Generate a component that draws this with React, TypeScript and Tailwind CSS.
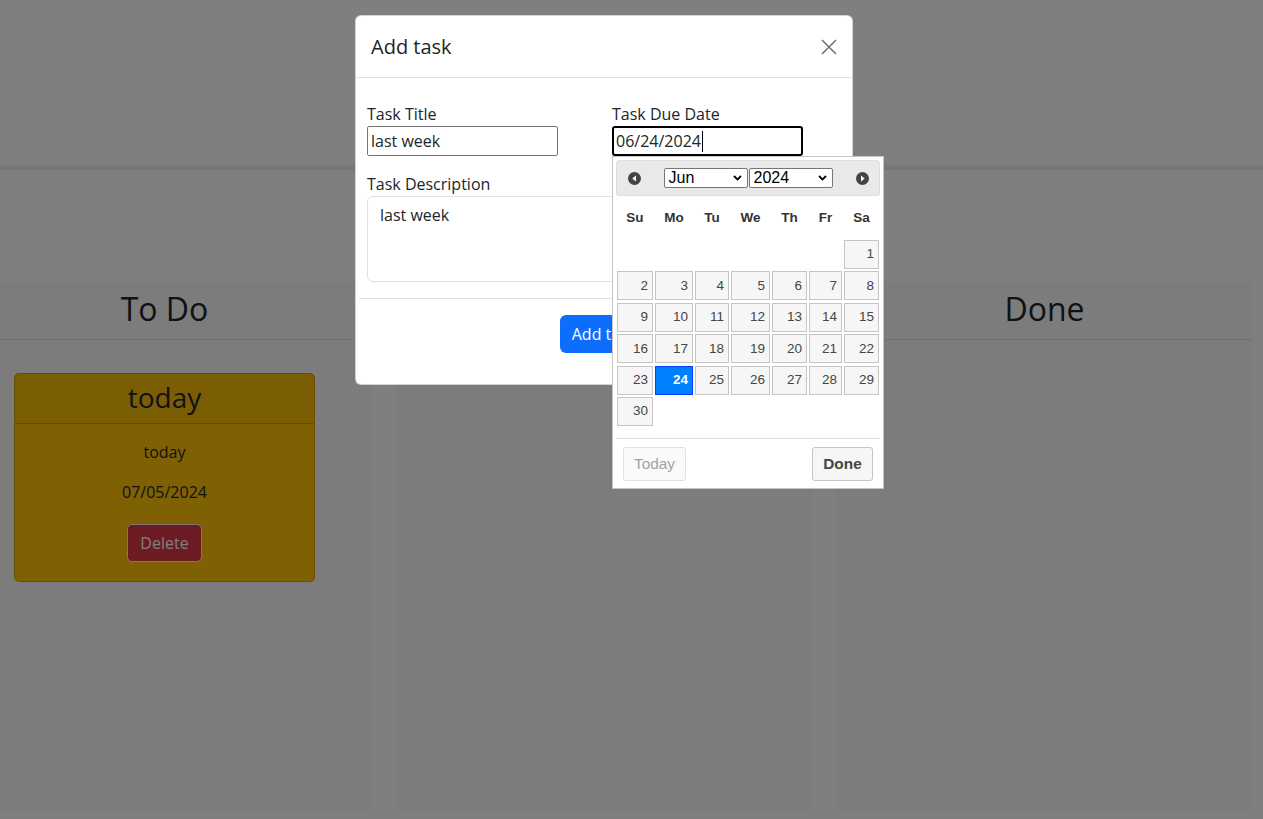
import React from "react";

const heads = ["Su", "Mo", "Tu", "We", "Th", "Fr", "Sa"];
const cells: (number | null)[] = [null, null, null, null, null, null];
for (let i = 1; i <= 30; i++) cells.push(i);

function Arrow({ dir }: { dir: "l" | "r" }) {
  return (
    <svg width="13" height="13" viewBox="0 0 13 13">
      <circle cx="6.5" cy="6.5" r="6.5" fill="#444444" />
      <polygon
        points={dir === "l" ? "8,3.5 8,9.5 4.3,6.5" : "5,3.5 5,9.5 8.7,6.5"}
        fill="#ffffff"
      />
    </svg>
  );
}

function FakeSelect({ label }: { label: string }) {
  return (
    <div className="flex h-[20px] w-[84px] items-center justify-between rounded-[2px] border border-[#767676] bg-white pl-[4px] pr-[5px] text-[16px] leading-none text-black">
      <span>{label}</span>
      <svg width="9" height="6" viewBox="0 0 9 6">
        <path d="M1 1 L4.5 4.5 L8 1" fill="none" stroke="#000" strokeWidth="1.8" />
      </svg>
    </div>
  );
}

function Column({ title, children }: { title: string; children?: React.ReactNode }) {
  return (
    <div className="h-[528px] w-[415px] shrink-0 rounded-[6px] bg-[#f8f9fa]">
      <div className="flex h-[58px] items-center justify-center border-b border-[#dee2e6] pb-[4px] text-[32px] font-normal leading-none">
        {title}
      </div>
      <div className="pt-[33px]">{children}</div>
    </div>
  );
}

export default function App() {
  return (
    <div className="relative h-[819px] w-[1263px] overflow-hidden bg-white font-['Open_Sans',sans-serif] text-[#212529]">
      {/* page underneath */}
      <header className="h-[170px] border-b-[5px] border-[#eeeeee]" />
      <main className="ml-[-43px] mt-[112px] flex gap-[25px]">
        <Column title="To Do">
          <div className="mx-auto w-[301px] overflow-hidden rounded-[5px] border border-[rgba(0,0,0,0.175)] bg-[#ffc107]">
            <div className="flex h-[50px] items-center justify-center border-b border-[rgba(0,0,0,0.175)] bg-[rgba(0,0,0,0.03)] pb-[4px] text-[28px] leading-none">
              today
            </div>
            <div className="flex flex-col items-center px-4 pb-[19px] pt-4 text-[16px]">
              <p className="leading-[24px]">today</p>
              <p className="mt-4 leading-[24px]">07/05/2024</p>
              <button className="mt-5 h-[38px] rounded-[5px] border border-[#f2f2f2] bg-[#dc3545] px-[12px] leading-[24px] text-white">
                Delete
              </button>
            </div>
          </div>
        </Column>
        <Column title="In Progress" />
        <Column title="Done" />
      </main>

      {/* backdrop */}
      <div className="absolute inset-0 bg-[rgba(0,0,0,0.5)]" />

      {/* modal */}
      <div className="absolute left-[355px] top-[15px] w-[498px] rounded-[6px] border border-[rgba(0,0,0,0.175)] bg-white">
        <div className="flex h-[62px] items-center justify-between border-b border-[#dee2e6] pl-[15px] pr-[15px]">
          <h5 className="text-[20px] font-normal leading-[30px]">Add task</h5>
          <svg width="16" height="16" viewBox="0 0 16 16">
            <path d="M1 1 L15 15 M15 1 L1 15" stroke="#000" strokeOpacity="0.55" strokeWidth="1.6" />
          </svg>
        </div>
        <div className="px-[11px] pb-[16px] pt-[24px] text-[16px]">
          <div className="flex">
            <div className="w-[245px]">
              <div className="leading-[24px]">Task Title</div>
              <div className="flex h-[30px] w-[191px] items-center rounded-[2px] border border-[#767676] pl-[3px] leading-none">
                last week
              </div>
            </div>
            <div>
              <div className="leading-[24px]">Task Due Date</div>
              <div className="flex h-[30px] w-[191px] items-center rounded-[3px] border-2 border-black pl-[2px] leading-none">
                06/24/2024
                <span className="ml-[1px] inline-block h-[21px] w-px bg-black" />
              </div>
            </div>
          </div>
          <div className="mt-[16px] leading-[24px]">Task Description</div>
          <div className="h-[86px] w-full rounded-[6px] border border-[#dee2e6] px-[12px] py-[6px] leading-[24px]">
            last week
          </div>
        </div>
        <div className="mx-[3px] flex justify-center border-t border-[#dee2e6] pb-[31px] pt-[16px]">
          <button className="h-[38px] rounded-[6px] bg-[#0d6efd] px-[12px] text-[16px] leading-[24px] text-white">
            Add task
          </button>
        </div>
      </div>

      {/* datepicker */}
      <div className="absolute left-[612px] top-[156px] w-[272px] border border-[#c5c5c5] bg-white p-[3px] font-['Liberation_Sans',Arial,sans-serif]">
        <div className="flex h-[36px] items-center rounded-[3px] border border-[#dddddd] bg-[#e9e9e9]">
          <div className="flex w-[34px] justify-center">
            <Arrow dir="l" />
          </div>
          <div className="flex flex-1 justify-center gap-[1px]">
            <FakeSelect label="Jun" />
            <FakeSelect label="2024" />
          </div>
          <div className="flex w-[34px] justify-center">
            <Arrow dir="r" />
          </div>
        </div>
        <div className="ml-[1px] grid grid-cols-[36px_38px_34px_39px_35px_33px_35px] gap-x-[2px]">
          {heads.map((h) => (
            <div key={h} className="flex h-[42px] items-center justify-center pt-[2px] text-[13.5px] font-bold text-[#333333]">
              {h}
            </div>
          ))}
        </div>
        <div className="ml-[1px] mt-[2px] grid grid-cols-[36px_38px_34px_39px_35px_33px_35px] gap-x-[2px] gap-y-[2.4px]">
          {cells.map((d, i) =>
            d === null ? (
              <div key={i} className="h-[29px]" />
            ) : d === 24 ? (
              <div
                key={i}
                className="flex h-[29px] items-center justify-end border border-[#003eff] bg-[#007fff] pr-[4px] text-[13.5px] font-bold text-white"
              >
                {d}
              </div>
            ) : (
              <div
                key={i}
                className="flex h-[29px] items-center justify-end border border-[#c5c5c5] bg-[#f6f6f6] pr-[4px] text-[13.5px] text-[#454545]"
              >
                {d}
              </div>
            )
          )}
        </div>
        <div className="mt-[12px] flex justify-between border-t border-[#dddddd] px-[7px] pb-[4px] pt-[8px]">
          <button className="h-[34px] w-[63px] rounded-[3px] border border-[#c5c5c5] bg-[#f6f6f6] text-[15.4px] text-[#454545] opacity-50">
            Today
          </button>
          <button className="h-[34px] w-[61px] rounded-[3px] border border-[#c5c5c5] bg-[#f6f6f6] text-[15.4px] font-bold text-[#454545]">
            Done
          </button>
        </div>
      </div>
    </div>
  );
}
